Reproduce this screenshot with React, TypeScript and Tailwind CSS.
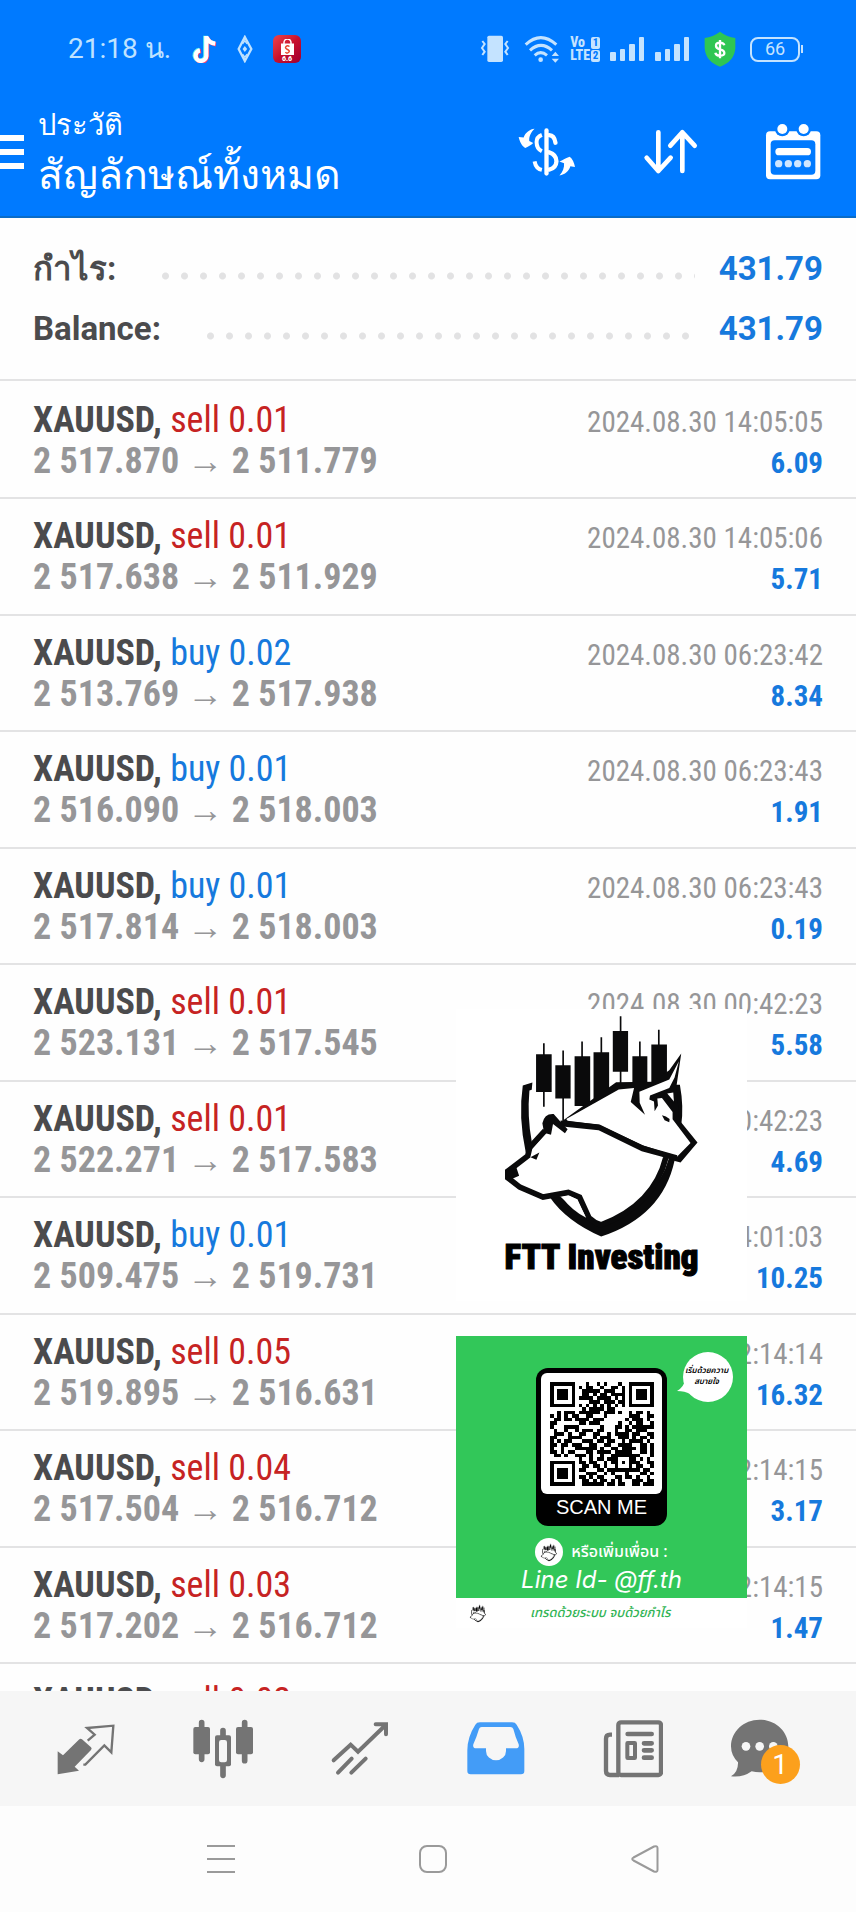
import type { ReactNode } from "react";

type Deal = {
  side: "sell" | "buy";
  lot: string;
  open: string;
  close: string;
  time: string;
  profit: string;
};

const DEALS: Deal[] = [
  { side: "sell", lot: "0.01", open: "2 517.870", close: "2 511.779", time: "2024.08.30 14:05:05", profit: "6.09" },
  { side: "sell", lot: "0.01", open: "2 517.638", close: "2 511.929", time: "2024.08.30 14:05:06", profit: "5.71" },
  { side: "buy", lot: "0.02", open: "2 513.769", close: "2 517.938", time: "2024.08.30 06:23:42", profit: "8.34" },
  { side: "buy", lot: "0.01", open: "2 516.090", close: "2 518.003", time: "2024.08.30 06:23:43", profit: "1.91" },
  { side: "buy", lot: "0.01", open: "2 517.814", close: "2 518.003", time: "2024.08.30 06:23:43", profit: "0.19" },
  { side: "sell", lot: "0.01", open: "2 523.131", close: "2 517.545", time: "2024.08.30 00:42:23", profit: "5.58" },
  { side: "sell", lot: "0.01", open: "2 522.271", close: "2 517.583", time: "2024.08.30 00:42:23", profit: "4.69" },
  { side: "buy", lot: "0.01", open: "2 509.475", close: "2 519.731", time: "2024.08.29 04:01:03", profit: "10.25" },
  { side: "sell", lot: "0.05", open: "2 519.895", close: "2 516.631", time: "2024.08.29 02:14:14", profit: "16.32" },
  { side: "sell", lot: "0.04", open: "2 517.504", close: "2 516.712", time: "2024.08.29 02:14:15", profit: "3.17" },
  { side: "sell", lot: "0.03", open: "2 517.202", close: "2 516.712", time: "2024.08.29 02:14:15", profit: "1.47" },
];

const QR = [
  "11111110001001010001001111111",
  "10000010101100100110101000001",
  "10111010011111011100101011101",
  "10111010011010110111101011101",
  "10111010111101111010101011101",
  "10000010000111011101101000001",
  "11111110101010101010101111111",
  "00000000010111101100000000000",
  "00101110111111011101001011010",
  "10101011001100010000001110011",
  "01101101111011100000010111010",
  "11000000110111000001001011001",
  "10001111000000100011010111111",
  "01001001011101100010011011100",
  "01110100110011001011110110011",
  "11000111100010111001110101101",
  "10101100011101101100101111010",
  "11011011100110011001111001101",
  "10010001111110100110111101101",
  "11010110001101111011111001101",
  "01101001110100100111111110001",
  "00000000100101101110001101010",
  "11111110110110010110101110011",
  "10000010011011010010001011001",
  "10111010110001101111111110110",
  "10111010001110010100010001101",
  "10111010110101100011011010010",
  "10000010011010110101000111011",
  "11111110011111101101100110111",
];

function StatusBar() {
  return (
    <div className="flex h-[98px] items-center justify-between pl-[68px] pr-[53px]">
      <div className="flex items-center">
        <span className="w-[123px] whitespace-nowrap text-[28px] leading-9 text-[#bfe2ff]">21:18 น.</span>
        <svg className="mr-5 h-7 w-[26px]" viewBox="576 106 76 84" aria-label="TikTok">
          <g fill="none" strokeWidth="13">
            <path d="M618 108V168A16 16 0 1 1 600 151M618 110Q625 129 646 131" stroke="#5cf3ee" />
            <path d="M623 111V171A16 16 0 1 1 605 154M623 113Q630 132 650 134" stroke="#ff3b6b" />
            <path d="M621 109V169A16 16 0 1 1 602 152M621 111Q628 130 648 132" stroke="#fff" />
          </g>
        </svg>
        <svg className="mr-5 h-7 w-4" viewBox="713 106 49 86" fill="none" stroke="#bfe2ff" strokeWidth="7">
          <path d="M737 112L757 149L737 186L718 149Z" />
          <path d="M737 140L744 149L737 158L730 149Z" fill="#bfe2ff" stroke="none" />
          <path d="M737 110V126M737 172V188M730 133L737 124L744 133M730 165L737 174L744 165" strokeWidth="4" />
        </svg>
        <span className="flex h-7 w-7 flex-col items-center rounded-md bg-linear-to-br from-[#f0404a] via-[#c8102e] to-[#a00030]">
          <svg className="mt-1 h-[17px] w-[15px]" viewBox="0 0 30 34" fill="none">
            <path d="M8 10V7A6 6 0 0 1 22 7V10" stroke="#fff" strokeWidth="3" />
            <path d="M2 9H28V32H2Z" fill="#fff" />
            <path d="M19 15Q15 12 12 15T15 21T17 27T11 26" stroke="#e8452c" strokeWidth="3" />
          </svg>
          <span className="text-[7px] font-black leading-[6px] text-white">6.6</span>
        </span>
      </div>

      <div className="flex items-center text-[#c4e3ff]">
        <svg className="h-7 w-[30px]" viewBox="156 106 90 84" fill="none" stroke="currentColor" strokeWidth="6">
          <rect x="178" y="108" width="47" height="79" rx="5" fill="currentColor" stroke="none" />
          <path d="M163 124L170 133L162 145L170 156L163 166M239 124L232 133L240 145L232 156L239 166" />
        </svg>
        <svg className="ml-[14px] h-7 w-9" viewBox="286 102 108 84" fill="none" stroke="currentColor" strokeWidth="9">
          <path d="M291 131Q336 89 383 131M304 148Q337 118 370 148M318 163Q336 147 355 163" />
          <circle cx="336" cy="176" r="7" fill="currentColor" stroke="none" />
          <path d="M369 165L380 152L391 165ZM369 173L380 185L391 173Z" fill="currentColor" stroke="none" />
        </svg>
        <div className="ml-[10px] flex flex-col font-['Roboto_Condensed'] text-[14px] font-extrabold leading-[13px]">
          <span className="flex items-center justify-between">
            <span>Vo</span>
            <span className="h-3 w-[9px] rounded-xs bg-[#c4e3ff] text-center text-[11px] leading-3 text-[#007aff]">1</span>
          </span>
          <span className="flex items-center gap-px">
            <span>LTE</span>
            <span className="h-3 w-[9px] rounded-xs bg-[#c4e3ff] text-center text-[11px] leading-3 text-[#007aff]">2</span>
          </span>
        </div>
        <SignalBars />
        <SignalBars />
        <svg className="ml-[14px] h-9 w-8" viewBox="827 95 96 106">
          <path d="M875 96Q896 112 921 115V146Q918 186 875 201Q832 186 829 146V115Q854 112 875 96Z" fill="#2fc653" />
          <path d="M888 137Q886 129 875 129Q863 129 863 138Q863 146 875 149Q888 152 888 160Q888 168 875 168Q863 168 861 159M875 121V176" fill="none" stroke="#fff" strokeWidth="7" />
        </svg>
        <div className="ml-[14px] flex items-center">
          <span className="flex h-[25px] w-[50px] items-center justify-center rounded-lg border-2 border-[#c4e3ff] text-[18px] leading-6">66</span>
          <span className="ml-px h-2 w-[2px] bg-[#c4e3ff]" />
        </div>
      </div>
    </div>
  );
}

function SignalBars() {
  return (
    <svg className="ml-[10px] h-[26px] w-[35px]" viewBox="0 0 35 26" fill="currentColor">
      <rect x="0" y="16" width="6" height="9" rx="1" />
      <rect x="10" y="13" width="5" height="12" rx="1" />
      <rect x="19" y="8" width="6" height="17" rx="1" />
      <rect x="29" y="1" width="5" height="24" rx="1" />
    </svg>
  );
}

function TopBar() {
  return (
    <div className="flex h-[118px] items-start">
      <button type="button" aria-label="Menu" className="mt-[37px] flex w-6 flex-col gap-2">
        <span className="h-[6px] bg-white" />
        <span className="h-[6px] bg-white" />
        <span className="h-[6px] bg-white" />
      </button>
      <div className="ml-[14px] flex-1 whitespace-nowrap text-white">
        <p className="pt-1 text-[29px] leading-[46px]">ประวัติ</p>
        <h1 className="text-[41px] leading-[54px]">สัญลักษณ์ทั้งหมด</h1>
      </div>
      <div className="flex items-center gap-[67px] pr-[35px] pt-[25px]">
        <button type="button" aria-label="Symbols">
          <svg className="h-[50px] w-[58px]" viewBox="270 379 175 150" fill="#fff">
            <path d="M320 384C306 385 292 396 287 410L272 409C275 424 283 438 292 442C300 438 310 433 316 427L304 421C303 405 310 394 320 384Z" />
            <path d="M395 483C404 478 416 471 426 468C434 474 440 486 442 499L428 497C424 511 412 522 395 525C405 514 410 502 409 488Z" />
            <g fill="none" stroke="#fff">
              <path d="M356 389V519" strokeWidth="13" strokeLinecap="round" />
              <path d="M364 403Q380 404 383 426M364 455Q386 462 386 482Q385 502 364 507" strokeWidth="13" strokeLinecap="round" />
              <path d="M342 402Q326 408 326 424Q326 444 342 452M342 508Q324 504 320 482" strokeWidth="12" strokeLinecap="butt" />
            </g>
          </svg>
        </button>
        <button type="button" aria-label="Sort">
          <svg className="h-[46px] w-[55px]" viewBox="645 386 165 138" fill="none" stroke="#fff" strokeWidth="14" strokeLinecap="round" strokeLinejoin="round">
            <path d="M691 396V512M656 472L691 512L728 472M763 512V396M727 436L763 396L800 436" />
          </svg>
        </button>
        <button type="button" aria-label="Period">
          <svg className="h-[57px] w-[56px]" viewBox="1011 365 168 171">
            <rect x="1014" y="390" width="163" height="144" rx="12" fill="#fff" />
            <rect x="1028" y="417" width="134" height="103" rx="12" fill="#007aff" />
            <g fill="#007aff">
              <circle cx="1063" cy="383" r="22" />
              <circle cx="1127" cy="383" r="22" />
            </g>
            <g fill="#fff">
              <circle cx="1063" cy="383" r="15" />
              <circle cx="1127" cy="383" r="15" />
              <rect x="1042" y="440" width="107" height="22" rx="11" />
            </g>
            <g fill="#cfe6ff">
              <circle cx="1052" cy="487" r="11" />
              <circle cx="1081" cy="487" r="11" />
              <circle cx="1109" cy="487" r="11" />
              <circle cx="1138" cy="487" r="11" />
            </g>
          </svg>
        </button>
      </div>
    </div>
  );
}

function SummaryLine({ label, value }: { label: string; value: string }) {
  return (
    <div className="flex h-[60px] items-center text-[33px] font-bold leading-[60px]">
      <dt className="text-[#4b4b4d]">{label}</dt>
      <div className="ml-10 mr-6 mt-[14px] h-2 flex-1 bg-[radial-gradient(circle,#e2e2e3_3px,transparent_4px)] bg-[size:19px_8px] bg-repeat-x" />
      <dd className="text-[#1679dd]">{value}</dd>
    </div>
  );
}

function DealTitle({ side, lot }: { side: Deal["side"]; lot: string }) {
  return (
    <p className="text-[36px] leading-[41px]">
      <b className="font-bold text-[#4b4b4d]">XAUUSD,</b>{" "}
      <span className={side === "sell" ? "text-[#c62323]" : "text-[#1679dd]"}>
        {side} {lot}
      </span>
    </p>
  );
}

function DealRow({ deal }: { deal: Deal }) {
  return (
    <li className="flex flex-1 items-start justify-between border-b-2 border-[#e3e3e4] px-[33px] pt-[17px] font-['Roboto_Condensed']">
      <div>
        <DealTitle side={deal.side} lot={deal.lot} />
        <p className="text-[36px] font-bold leading-[41px] text-[#969698]">
          {deal.open} <span className="font-normal">→</span> {deal.close}
        </p>
      </div>
      <div className="pt-[2px] text-right text-[29px] leading-[41px]">
        <p className="text-[#969698]">{deal.time}</p>
        <p className="font-bold text-[#1679dd]">{deal.profit}</p>
      </div>
    </li>
  );
}

/** Bull and bear heads over a shield, with a row of candles behind. */
function BullBearMark({ className }: { className: string }) {
  return (
    <svg className={className} viewBox="48 147 876 684" aria-hidden="true">
      <g fill="#0a0a0b">
        <path d="M310 249h5v33h21v114h-21v44h-5v-44h-21V282h21ZM368 271h5v44h20v100h-20v70h-5v-70h-21V315h21ZM425 244h5v44h22v150h-47V288h20ZM483 231h5v45h21v150h-47V276h21ZM541 168h5v44h20v123h-20v40h-5v-40h-21V212h21ZM599 244h5v44h20v110h-45V288h20ZM656 208h5v45h22v115h-47V253h20Z" />
        {/* shield */}
        <path d="M249 376L278 367L276 389L269 391Q262 470 276 545L258 578Q235 470 249 376ZM684 374H722Q734 440 726 496L700 460Q708 430 697 400ZM330 712L362 710Q420 765 485 792Q640 735 680 590L706 602Q670 770 485 831Q380 785 330 712Z" />
        {/* bull */}
        <path d="M372 480L530 366L640 365L690 330L726 280L712 376L720 480L775 548L724 608L610 578L478 512L372 508Z" />
      </g>
      <path d="M380 477L538 388L584 384L574 426L617 464L601 428L600 395L690 358L719 303L706 352L690 384L632 406L630 418L644 424L646 454L656 436L654 415L668 414L700 456L700 478L754 549L714 590L610 556L478 494L384 482Z" fill="#fff" />
      <path d="M668 466Q680 468 691 477L690 487L676 481ZM666 404L704 395L706 432Z" fill="#0a0a0b" />
      <path d="M684 400L702 397L704 424Z" fill="#fff" />
      {/* bear */}
      <path d="M266 566L318 510L320 486Q324 464 342 472L366 487L478 500L610 566L690 592Q650 735 485 792Q460 786 448 770L420 712L386 696L310 712L240 680L203 654V634L262 590Z" fill="#fff" />
      <path d="M680 592Q645 735 485 796Q462 788 448 774L420 712L386 698L310 712L240 682L204 654V634L264 588L270 562L316 512M362 490L478 502L610 566L712 594" fill="none" stroke="#0a0a0b" strokeWidth="17" />
      <path d="M268 566L312 512L308 490Q314 460 342 462L360 482L384 508L376 520L340 492L334 524L318 520L276 568ZM272 592L299 578L290 600ZM198 640L226 612L238 648L214 658Z" fill="#0a0a0b" />
      <path d="M366 712L388 707L412 719L440 774Q400 756 366 712Z" fill="#fff" />
    </svg>
  );
}

function LogoCard() {
  return (
    <div className="h-[292px] bg-white">
      <BullBearMark className="h-[228px] w-full" />
      <p className="whitespace-nowrap text-center font-['Roboto_Condensed'] text-[35px] font-black leading-[42px] text-black [-webkit-text-stroke:1px_black]">
        FTT Investing
      </p>
    </div>
  );
}

function QrCode() {
  const path = QR.flatMap((row, y) => [...row].map((bit, x) => (bit === "1" ? `M${x} ${y}h1v1h-1z` : ""))).join("");
  return (
    <svg className="h-[104px] w-[104px]" viewBox="0 0 29 29" shapeRendering="crispEdges" role="img" aria-label="QR code">
      <path d={path} fill="#000" />
    </svg>
  );
}

function ContactCard() {
  return (
    <div className="h-[292px] bg-white font-['Noto_Sans_Thai'] text-white">
      <div className="relative flex h-[262px] flex-col items-center bg-[#32c759] pt-8">
        <div className="flex w-[131px] flex-col rounded-xl bg-black p-[5px]">
          <div className="flex h-[121px] items-center justify-center rounded-md bg-white">
            <QrCode />
          </div>
          <p className="text-center font-['Liberation_Sans'] text-[20px] leading-[27px]">SCAN ME</p>
        </div>
        <div className="mt-3 flex items-center gap-2">
          <span className="flex h-7 w-7 items-center justify-center rounded-full bg-white">
            <BullBearMark className="h-5 w-6" />
          </span>
          <span className="whitespace-nowrap text-[16px] font-medium leading-7">หรือเพิ่มเพื่อน :</span>
        </div>
        <p className="whitespace-nowrap font-['Inter'] text-[24px] italic leading-7">Line Id- @ff.th</p>

        <div className="absolute right-[13px] top-4">
          <svg className="h-[52px] w-[58px]" viewBox="0 0 58 52" fill="#fff">
            <circle cx="32" cy="25" r="25" />
            <path d="M9 28Q8 35 1 39Q9 39 14 42Z" />
          </svg>
          <p className="absolute left-[9px] top-[14px] whitespace-nowrap text-center text-[8px] font-semibold italic leading-[11px] text-black">
            เริ่มด้วยความ
            <br />
            สบายใจ
          </p>
        </div>
      </div>
      <div className="flex h-[30px] items-center pl-[10px]">
        <BullBearMark className="h-5 w-6" />
        <p className="ml-10 whitespace-nowrap text-[13px] font-medium italic leading-5 text-[#32b455]">เทรดด้วยระบบ จบด้วยกำไร</p>
      </div>
    </div>
  );
}

function Tab({ label, children }: { label: string; children: ReactNode }) {
  return (
    <button type="button" aria-label={label} className="flex items-center justify-center text-[#747474]">
      {children}
    </button>
  );
}

function TabBar() {
  return (
    <nav className="grid h-[115px] shrink-0 grid-cols-6 bg-[#f6f6f6] px-[18px]">
      <Tab label="Quotes">
        <svg className="h-[60px] w-[60px]" viewBox="172 236 180 180">
          <path d="M177 333L193 345L242 297Q246 293 250 297L277 321Q281 325 277 329L228 379L241 391L177 402Z" fill="currentColor" />
          <path d="M267 301L288 283L265 263L344 256L338 336L317 315L260 373H254" fill="none" stroke="currentColor" strokeWidth="7" />
        </svg>
      </Tab>
      <Tab label="Charts">
        <svg className="h-[60px] w-[60px]" viewBox="579 236 180 180">
          <path d="M605 247V357M734 247V361M669 271V405" stroke="currentColor" strokeWidth="17" strokeLinecap="round" />
          <rect x="580" y="260" width="50" height="82" rx="6" fill="currentColor" />
          <rect x="708" y="260" width="51" height="82" rx="6" fill="currentColor" />
          <rect x="645" y="285" width="48" height="93" rx="6" fill="currentColor" />
          <rect x="657" y="299" width="24" height="67" rx="7" fill="#f6f6f6" />
        </svg>
      </Tab>
      <Tab label="Trade">
        <svg className="h-[60px] w-[60px]" viewBox="989 236 180 180" fill="none" stroke="currentColor" strokeWidth="12" strokeLinecap="round">
          <path d="M1000 360L1051 313L1073 334L1156 254M1126 252H1157V282M1013 397L1054 355M1053 397L1096 355" />
        </svg>
      </Tab>
      <Tab label="History">
        <svg className="h-[60px] w-[60px]" viewBox="116 236 180 180">
          <path d="M158 246H254Q264 246 268 253Q292 290 291 330V392Q291 402 281 402H130Q120 402 120 392V330Q120 290 144 253Q148 246 158 246Z" fill="#439cf7" />
          <path d="M163 260H249Q256 260 258 266Q264 290 274 312Q277 324 265 324H236V332A30 28 0 0 1 176 332V324H147Q135 324 138 312Q148 290 155 266Q157 260 163 260Z" fill="#f6f6f6" />
        </svg>
      </Tab>
      <Tab label="News">
        <svg className="h-[60px] w-[60px]" viewBox="527 234 180 180" fill="none" stroke="currentColor" strokeWidth="13">
          <rect x="573" y="244" width="128" height="158" rx="8" />
          <path d="M554 281H548Q536 281 536 293V390Q536 402 548 402H575" />
          <rect x="600" y="306" width="23" height="45" rx="1" strokeWidth="12" />
          <path d="M601 279H673M650 307H673M650 328H673M650 350H673" strokeWidth="14" strokeLinecap="round" />
        </svg>
      </Tab>
      <Tab label="Messages">
        <span className="relative h-[60px] w-[78px]">
          <svg className="h-[60px] w-[58px]" viewBox="908 236 174 180">
            <path d="M994 238C1042 238 1080 274 1080 318C1080 362 1042 396 994 396Q982 396 970 393Q944 412 908 408Q930 394 929 366Q908 345 908 318C908 274 946 238 994 238Z" fill="currentColor" />
            <g fill="#f6f6f6">
              <circle cx="953" cy="318" r="13" />
              <circle cx="994" cy="318" r="13" />
              <circle cx="1035" cy="318" r="13" />
            </g>
          </svg>
          <span className="absolute left-[30px] top-[26px] h-[39px] w-[39px] rounded-full bg-[#fca01c] text-center text-[28px] leading-[39px] text-white">1</span>
        </span>
      </Tab>
    </nav>
  );
}

function SystemNav() {
  return (
    <div className="flex h-[106px] shrink-0 items-center justify-center gap-[184px] bg-[#fdfdfd] pl-[10px] text-[#9a9a9a]">
      <button type="button" aria-label="Recent apps" className="flex w-7 flex-col gap-[11px]">
        <span className="h-[2px] bg-current" />
        <span className="h-[2px] bg-current" />
        <span className="h-[2px] bg-current" />
      </button>
      <button type="button" aria-label="Home" className="h-7 w-7 rounded-lg border-2 border-current" />
      <button type="button" aria-label="Back">
        <svg className="h-7 w-7" viewBox="0 0 56 56" fill="none" stroke="currentColor" strokeWidth="4" strokeLinejoin="round">
          <path d="M5 25L46 3Q53 1 53 6V50Q53 55 46 53L5 31Q0 28 5 25Z" />
        </svg>
      </button>
    </div>
  );
}

export default function App() {
  return (
    <div className="flex h-screen flex-col overflow-hidden bg-[#fefefe] font-['Roboto',sans-serif]">
      <header className="shrink-0 border-b-2 border-[#0a6cc8] bg-[#007aff]">
        <StatusBar />
        <TopBar />
      </header>

      <dl className="shrink-0 border-b-2 border-[#e3e3e4] px-[33px] pb-5 pt-[21px]">
        <SummaryLine label="กำไร:" value="431.79" />
        <SummaryLine label="Balance:" value="431.79" />
      </dl>

      <main className="relative flex-1">
        <ul className="flex h-full flex-col pt-[2px]">
          {DEALS.map((deal) => (
            <DealRow key={deal.open} deal={deal} />
          ))}
          <li className="h-[27px] shrink-0 overflow-hidden px-[33px] pt-[17px] font-['Roboto_Condensed']">
            <DealTitle side="sell" lot="0.02" />
          </li>
        </ul>
        <aside className="absolute right-[109px] top-[628px] flex w-[291px] flex-col gap-[35px]">
          <LogoCard />
          <ContactCard />
        </aside>
      </main>

      <TabBar />
      <SystemNav />
    </div>
  );
}
